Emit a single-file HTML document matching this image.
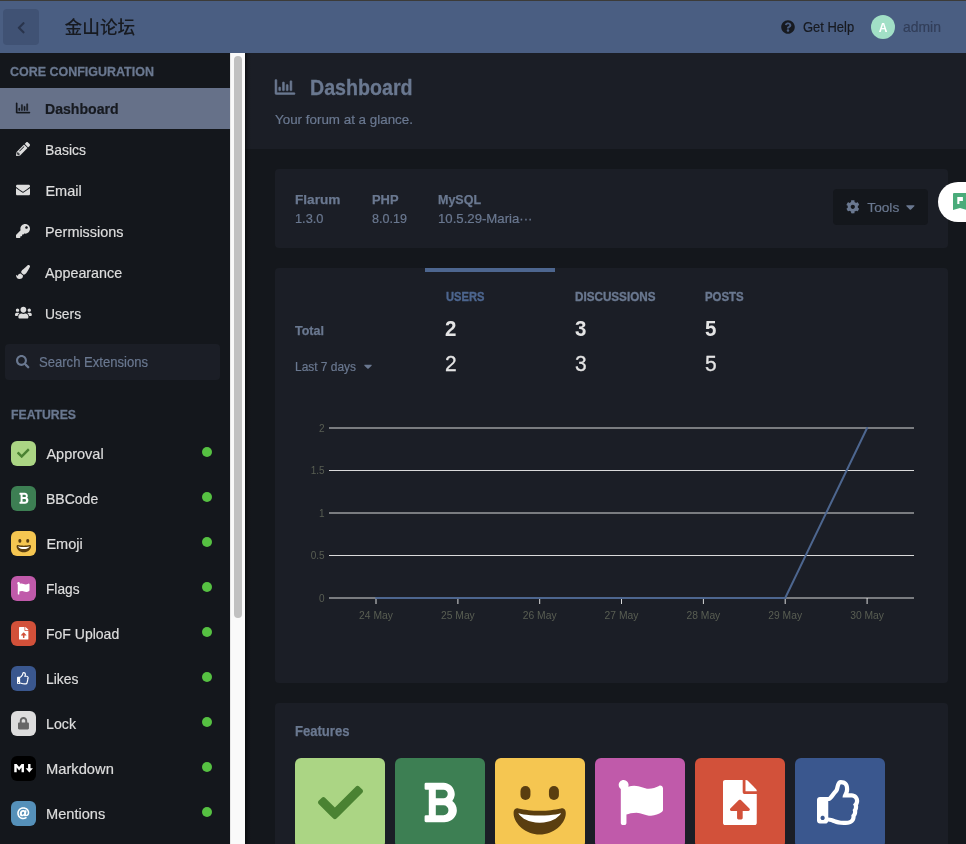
<!DOCTYPE html>
<html lang="zh"><head><meta charset="utf-8"><title>金山论坛 - Dashboard</title>
<style>
html,body{margin:0;padding:0}
body{width:966px;height:844px;overflow:hidden;position:relative;background:#14171c;font-family:"Liberation Sans", "Noto Sans CJK SC", sans-serif;color:#dddddd}
.t{position:absolute;white-space:nowrap;transform-origin:0 50%}
header,aside,main{will-change:transform}
.abs{position:absolute}
header{position:absolute;left:0;top:0;width:966px;height:53px;background:#4a5e82;box-sizing:border-box;border-top:1px solid #3c3b38}
aside{position:absolute;left:0;top:53px;width:230px;height:791px;background:#14171c}
.track{position:absolute;left:230px;top:53px;width:15px;height:791px;background:#fafafa;box-shadow:inset 1px 0 0 #e8e8e8}
.thumb{position:absolute;left:4px;top:3px;width:8px;height:562px;border-radius:4px;background:#c1c1c1}
main{position:absolute;left:245px;top:53px;width:721px;height:791px;background:#14171c;overflow:hidden}
.widget{position:absolute;background:#1b1e26;border-radius:4px}
.tile{position:absolute;width:90px;height:90px;border-radius:6px;top:758px}
.ico{position:absolute;left:11px;width:25px;height:25px;border-radius:6px}
.dot{position:absolute;left:202px;width:10px;height:10px;border-radius:5px;background:#56c142}
</style></head><body>

<header>
<div class="abs" style="left:3px;top:8px;width:36px;height:36px;border-radius:4px;background:#405274"></div>
<svg width="8.4" height="13.4" viewBox="0 0 320 512" style="position:absolute;left:16.9px;top:20.0px;overflow:visible"><path fill="#29344c" d="M34.520 239.030L228.870 44.690c9.370-9.370 24.570-9.370 33.940 0l22.670 22.670c9.360 9.360 9.370 24.520.04 33.900L131.490 256l154.020 154.750c9.340 9.380 9.320 24.540-.04 33.900l-22.670 22.670c-9.370 9.370-24.570 9.370-33.940 0L34.520 272.970c-9.370-9.370-9.370-24.570 0-33.940z"/></svg>
<div class="t" style="left:64.5px;top:17px;font-size:17.7px;line-height:20px;color:#171a20;font-weight:500;">金山论坛</div>
<svg width="14" height="14" viewBox="0 0 512 512" style="position:absolute;left:781px;top:19px;overflow:visible"><path fill="#171a20" d="M504 256c0 136.997-111.043 248-248 248S8 392.997 8 256C8 119.083 119.043 8 256 8s248 111.083 248 248zM262.655 90c-54.497 0-89.255 22.957-116.549 63.758-3.536 5.286-2.353 12.415 2.715 16.258l34.699 26.310c5.205 3.947 12.621 3.008 16.665-2.122 17.864-22.658 30.113-35.797 57.303-35.797 20.429 0 45.698 13.148 45.698 32.958 0 14.976-12.363 22.667-32.534 33.976C247.128 238.528 216 254.941 216 296v4c0 6.627 5.373 12 12 12h56c6.627 0 12-5.373 12-12v-1.333c0-28.462 83.186-29.647 83.186-106.667 0-58.002-60.165-102-116.531-102zM256 338c-25.365 0-46 20.635-46 46 0 25.364 20.635 46 46 46s46-20.636 46-46c0-25.365-20.635-46-46-46z"/></svg>
<div class="t" style="left:802.5px;top:18px;font-size:14.0px;line-height:16px;color:#171a20;font-weight:normal;transform:scaleX(0.925);-webkit-text-stroke:0.2px #171a20;">Get Help</div>
<div class="abs" style="left:871px;top:14px;width:24px;height:24px;border-radius:12px;background:#a1dfc6"></div>
<div class="t" style="left:878.8px;top:20px;font-size:12px;line-height:14px;color:#ffffff;font-weight:bold;">A</div>
<div class="t" style="left:903.3px;top:18px;font-size:14.6px;line-height:16px;color:#323e59;font-weight:normal;transform:scaleX(0.955);-webkit-text-stroke:0.2px #323e59;">admin</div>
</header>
<aside>
<div class="t" style="left:10.3px;top:11px;font-size:13.5px;line-height:15px;color:#6a7890;font-weight:bold;transform:scaleX(0.924);-webkit-text-stroke:0.3px #6a7890;">CORE CONFIGURATION</div>
<div class="abs" style="left:0;top:35px;width:230px;height:41px;background:#667189"></div>
<div class="t" style="left:45.4px;top:48px;font-size:14.5px;line-height:16px;color:#171a20;font-weight:bold;transform:scaleX(0.972);-webkit-text-stroke:0.2px #171a20;">Dashboard</div>
<svg width="14" height="14" viewBox="0 0 512 512" style="position:absolute;left:16px;top:47.900000000000006px;overflow:visible"><path fill="#171a20" stroke="#171a20" stroke-width="12" stroke-linejoin="round" d="M396.8 352h22.400c6.400 0 12.800-6.400 12.800-12.800V108.800c0-6.400-6.400-12.800-12.800-12.800h-22.400c-6.400 0-12.800 6.400-12.800 12.800v230.400c0 6.400 6.400 12.800 12.800 12.800zm-192 0h22.400c6.400 0 12.800-6.400 12.800-12.800V140.800c0-6.400-6.400-12.800-12.800-12.800h-22.400c-6.400 0-12.800 6.400-12.800 12.800v198.400c0 6.400 6.400 12.800 12.800 12.800zm96 0h22.400c6.400 0 12.800-6.400 12.800-12.800V204.800c0-6.400-6.400-12.800-12.800-12.800h-22.400c-6.400 0-12.800 6.400-12.800 12.800v134.400c0 6.400 6.400 12.800 12.800 12.800zM496 400H48V80c0-8.840-7.160-16-16-16H16C7.160 64 0 71.160 0 80v336c0 17.670 14.330 32 32 32h464c8.840 0 16-7.160 16-16v-16c0-8.840-7.160-16-16-16zm-387.200-48h22.400c6.400 0 12.800-6.400 12.800-12.800v-70.400c0-6.400-6.400-12.800-12.800-12.800h-22.400c-6.400 0-12.800 6.400-12.800 12.800v70.400c0 6.400 6.400 12.800 12.800 12.800z"/></svg>
<div class="t" style="left:45.4px;top:89px;font-size:14.5px;line-height:16px;color:#dddddd;font-weight:normal;transform:scaleX(0.959);-webkit-text-stroke:0.2px #dddddd;">Basics</div>
<svg width="14" height="14" viewBox="0 0 512 512" style="position:absolute;left:16px;top:88.9px;overflow:visible"><path fill="#dddddd" d="M497.900 142.100l-46.100 46.100c-4.700 4.700-12.300 4.700-17 0l-111-111c-4.700-4.700-4.700-12.300 0-17l46.100-46.100c18.700-18.700 49.100-18.700 67.900 0l60.100 60.100c18.800 18.700 18.800 49.100 0 67.900zM284.200 99.800L21.600 362.400.4 483.900c-2.900 16.400 11.400 30.600 27.800 27.800l121.500-21.300 262.600-262.600c4.700-4.700 4.700-12.300 0-17l-111-111c-4.800-4.700-12.400-4.700-17.100 0zM124.100 339.900c-5.500-5.500-5.500-14.300 0-19.800l154-154c5.500-5.500 14.300-5.500 19.800 0s5.500 14.300 0 19.800l-154 154c-5.500 5.500-14.300 5.500-19.800 0zM88 424h48v36.300l-64.500 11.300-31.100-31.100L51.700 376H88v48z"/></svg>
<div class="t" style="left:45.4px;top:130px;font-size:14.5px;line-height:16px;color:#dddddd;font-weight:normal;transform:scaleX(1.0);-webkit-text-stroke:0.2px #dddddd;">Email</div>
<svg width="14" height="14" viewBox="0 0 512 512" style="position:absolute;left:16px;top:129.9px;overflow:visible"><path fill="#dddddd" d="M502.300 190.800c3.900-3.100 9.700-.2 9.700 4.700V400c0 26.500-21.500 48-48 48H48c-26.500 0-48-21.500-48-48V195.600c0-5 5.700-7.800 9.700-4.700 22.400 17.400 52.100 39.500 154.100 113.600 21.100 15.400 56.700 47.800 92.200 47.600 35.700.3 72-32.800 92.300-47.600 102-74.100 131.600-96.300 154-113.700zM256 320c23.200.4 56.600-29.200 73.400-41.400 132.700-96.300 142.800-104.700 173.400-128.700 5.800-4.500 9.200-11.500 9.200-18.900v-19c0-26.500-21.500-48-48-48H48C21.500 64 0 85.500 0 112v19c0 7.400 3.400 14.300 9.200 18.900 30.600 23.900 40.700 32.400 173.400 128.700 16.800 12.200 50.200 41.800 73.400 41.400z"/></svg>
<div class="t" style="left:45.4px;top:171px;font-size:14.5px;line-height:16px;color:#dddddd;font-weight:normal;transform:scaleX(0.993);-webkit-text-stroke:0.2px #dddddd;">Permissions</div>
<svg width="14" height="14" viewBox="0 0 512 512" style="position:absolute;left:16px;top:170.9px;overflow:visible"><path fill="#dddddd" d="M512 176.001C512 273.203 433.202 352 336 352c-11.220 0-22.190-1.062-32.827-3.069l-24.012 27.014A23.999 23.999 0 0 1 261.223 384H224v40c0 13.255-10.745 24-24 24h-40v40c0 13.255-10.745 24-24 24H24c-13.255 0-24-10.745-24-24v-78.059c0-6.365 2.529-12.470 7.029-16.971l161.802-161.802C163.108 213.814 160 195.271 160 176 160 78.798 238.797.001 335.999 0 433.488-.001 512 78.511 512 176.001zM336 128c0 26.510 21.490 48 48 48s48-21.490 48-48-21.490-48-48-48-48 21.490-48 48z"/></svg>
<div class="t" style="left:45.4px;top:212px;font-size:14.5px;line-height:16px;color:#dddddd;font-weight:normal;transform:scaleX(0.986);-webkit-text-stroke:0.2px #dddddd;">Appearance</div>
<svg width="14" height="14" viewBox="0 0 512 512" style="position:absolute;left:16px;top:211.89999999999998px;overflow:visible"><path fill="#dddddd" d="M167.020 309.340c-40.120 2.580-76.530 17.860-97.190 72.300-2.350 6.210-8 9.980-14.590 9.980-11.110 0-45.460-27.670-55.250-34.350C0 439.620 37.930 512 128 512c75.860 0 128-43.770 128-120.190 0-3.110-.65-6.080-.97-9.130l-88.010-73.340zM457.890 0c-15.160 0-29.370 6.710-40.210 16.450C213.270 199.050 192 203.340 192 257.090c0 13.700 3.250 26.760 8.730 38.700l63.820 53.180c7.210 1.800 14.640 3.030 22.390 3.030 62.110 0 98.110-45.470 211.160-256.460 7.380-14.350 13.900-29.850 13.900-45.990C512 20.640 486 0 457.890 0z"/></svg>
<div class="t" style="left:45.4px;top:253px;font-size:14.5px;line-height:16px;color:#dddddd;font-weight:normal;transform:scaleX(0.952);-webkit-text-stroke:0.2px #dddddd;">Users</div>
<svg width="16.8" height="13.4" viewBox="0 0 640 512" style="position:absolute;left:14.6px;top:253.2px;overflow:visible"><path fill="#dddddd" d="M96 224c35.300 0 64-28.700 64-64s-28.700-64-64-64-64 28.700-64 64 28.700 64 64 64zm448 0c35.300 0 64-28.700 64-64s-28.700-64-64-64-64 28.700-64 64 28.700 64 64 64zm32 32h-64c-17.600 0-33.500 7.100-45.100 18.600 40.300 22.100 68.900 62 75.100 109.400h66c17.700 0 32-14.300 32-32v-32c0-35.300-28.700-64-64-64zm-256 0c61.900 0 112-50.100 112-112S381.900 32 320 32 208 82.100 208 144s50.100 112 112 112zm76.800 32h-8.300c-20.800 10-43.900 16-68.500 16s-47.600-6-68.500-16h-8.300C179.600 288 128 339.600 128 403.200V432c0 26.500 21.500 48 48 48h288c26.500 0 48-21.500 48-48v-28.800c0-63.600-51.600-115.200-115.200-115.200zm-223.700-13.400C161.500 263.100 145.600 256 128 256H64c-35.300 0-64 28.700-64 64v32c0 17.700 14.300 32 32 32h65.900c6.300-47.400 34.900-87.300 75.200-109.400z"/></svg>
<div class="abs" style="left:5px;top:291px;width:215px;height:36px;border-radius:4px;background:#1b1e26"></div>
<svg width="13.5" height="13.5" viewBox="0 0 512 512" style="position:absolute;left:16px;top:302.3px;overflow:visible"><path fill="#6a7890" d="M505 442.700L405.300 343c-4.500-4.500-10.600-7-17-7H372c27.600-35.300 44-79.700 44-128C416 93.100 322.900 0 208 0S0 93.100 0 208s93.100 208 208 208c48.300 0 92.700-16.400 128-44v16.300c0 6.400 2.500 12.500 7 17l99.700 99.700c9.400 9.400 24.600 9.400 33.900 0l28.300-28.300c9.400-9.400 9.400-24.600.1-34zM208 336c-70.700 0-128-57.200-128-128 0-70.700 57.200-128 128-128 70.700 0 128 57.200 128 128 0 70.700-57.200 128-128 128z"/></svg>
<div class="t" style="left:39.3px;top:301px;font-size:14.0px;line-height:16px;color:#6a7890;font-weight:normal;transform:scaleX(0.934);-webkit-text-stroke:0.2px #6a7890;">Search Extensions</div>
<div class="t" style="left:10.5px;top:354px;font-size:13.6px;line-height:15px;color:#6a7890;font-weight:bold;transform:scaleX(0.9);-webkit-text-stroke:0.3px #6a7890;">FEATURES</div>
<div class="ico" style="top:388px;background:#abd584">
<svg width="12.5" height="12.5" viewBox="0 0 512 512" style="position:absolute;left:6.25px;top:6.25px;overflow:visible"><path fill="#4a8232" d="M173.898 439.404l-166.400-166.400c-9.997-9.997-9.997-26.206 0-36.204l36.203-36.204c9.997-9.998 26.207-9.998 36.204 0L192 312.690 432.095 72.596c9.997-9.997 26.207-9.997 36.204 0l36.203 36.204c9.997 9.997 9.997 26.206 0 36.204l-294.400 294.401c-9.998 9.997-26.207 9.997-36.204-.001z"/></svg>
</div>
<div class="t" style="left:46.4px;top:393px;font-size:14.5px;line-height:16px;color:#dddddd;font-weight:normal;transform:scaleX(1.0);-webkit-text-stroke:0.2px #dddddd;">Approval</div>
<div class="dot" style="top:394px"></div>
<div class="ico" style="top:433px;background:#3d7f53">
<svg width="9.375" height="12.5" viewBox="0 0 384 512" style="position:absolute;left:7.8125px;top:6.25px;overflow:visible"><path fill="#ffffff" d="M333.490 238a122 122 0 0 0 27-65.210C367.870 96.490 308 32 233.420 32H34a16 16 0 0 0-16 16v48a16 16 0 0 0 16 16h31.870v288H34a16 16 0 0 0-16 16v48a16 16 0 0 0 16 16h209.320c70.800 0 134.140-51.750 141-122.400 4.740-48.450-16.390-92.060-50.830-119.600zM145.660 112h87.760a48 48 0 0 1 0 96h-87.760zm87.760 288h-87.760V288h87.760a56 56 0 0 1 0 112z"/></svg>
</div>
<div class="t" style="left:46.4px;top:438px;font-size:14.5px;line-height:16px;color:#dddddd;font-weight:normal;transform:scaleX(0.966);-webkit-text-stroke:0.2px #dddddd;">BBCode</div>
<div class="dot" style="top:439px"></div>
<div class="ico" style="top:478px;background:#f5c651">
<svg viewBox="0 0 36 36" width="23.6" height="23.6" style="position:absolute;left:0.7px;top:0.9px"><path fill="#5a3e10" d="M18 21c-3.623 0-6.027-.422-9-1-.679-.131-2 0-2 2 0 4 4.595 9 11 9 6.404 0 11-5 11-9 0-2-1.321-2.132-2-2-2.973.578-5.377 1-9 1z"/><path fill="#FFF" d="M9 22s3 1 9 1 9-1 9-1-2 4-9 4-9-4-9-4z"/><rect fill="#5a3e10" x="9.9" y="10.55" width="4.2" height="5.9" rx="2.1"/><rect fill="#5a3e10" x="21.9" y="10.55" width="4.2" height="5.9" rx="2.1"/></svg>
</div>
<div class="t" style="left:46.4px;top:483px;font-size:14.5px;line-height:16px;color:#dddddd;font-weight:normal;transform:scaleX(1.0);-webkit-text-stroke:0.2px #dddddd;">Emoji</div>
<div class="dot" style="top:484px"></div>
<div class="ico" style="top:523px;background:#c05aaa">
<svg width="12.5" height="12.5" viewBox="0 0 512 512" style="position:absolute;left:6.25px;top:6.25px;overflow:visible"><path fill="#ffffff" d="M349.565 98.783C295.978 98.783 251.721 64 184.348 64c-24.955 0-47.309 4.384-68.045 12.013a55.947 55.947 0 0 0 3.586-23.562C118.117 24.015 94.806 1.206 66.338.048 34.345-1.254 8 24.296 8 56c0 19.026 9.497 35.825 24 45.945V488c0 13.255 10.745 24 24 24h16c13.255 0 24-10.745 24-24v-94.4c28.311-12.064 63.582-22.122 114.435-22.122 53.588 0 97.844 34.783 165.217 34.783 48.169 0 86.667-16.294 122.505-40.858C506.84 359.452 512 349.571 512 339.045v-243.1c0-23.393-24.269-38.87-45.485-29.016-34.338 15.948-76.454 31.854-116.95 31.854z"/></svg>
</div>
<div class="t" style="left:46.4px;top:528px;font-size:14.5px;line-height:16px;color:#dddddd;font-weight:normal;transform:scaleX(0.945);-webkit-text-stroke:0.2px #dddddd;">Flags</div>
<div class="dot" style="top:529px"></div>
<div class="ico" style="top:568px;background:#d2513a">
<svg width="9.375" height="12.5" viewBox="0 0 384 512" style="position:absolute;left:7.8125px;top:6.25px;overflow:visible"><path fill="#ffffff" d="M224 136V0H24C10.7 0 0 10.7 0 24v464c0 13.3 10.7 24 24 24h336c13.3 0 24-10.700 24-24V160H248c-13.200 0-24-10.800-24-24zm65.180 216.010H224v80c0 8.840-7.160 16-16 16h-32c-8.840 0-16-7.160-16-16v-80H94.820c-14.280 0-21.410-17.290-11.270-27.360l96.420-95.700c6.650-6.610 17.390-6.610 24.040 0l96.420 95.700c10.150 10.070 3.030 27.360-11.250 27.360zM377 105L279.100 7c-4.500-4.500-10.600-7-17-7H256v128h128v-6.100c0-6.300-2.500-12.400-7-16.900z"/></svg>
</div>
<div class="t" style="left:46.4px;top:573px;font-size:14.5px;line-height:16px;color:#dddddd;font-weight:normal;transform:scaleX(0.966);-webkit-text-stroke:0.2px #dddddd;">FoF Upload</div>
<div class="dot" style="top:574px"></div>
<div class="ico" style="top:613px;background:#3a578e">
<svg width="12.5" height="12.5" viewBox="0 0 512 512" style="position:absolute;left:6.25px;top:6.25px;overflow:visible"><path fill="#ffffff" d="M466.27 286.69C475.04 271.84 480 256 480 236.85c0-44.015-37.218-85.580-85.820-85.580H357.700c4.920-12.810 8.850-28.130 8.850-46.540C366.550 31.936 328.860 0 271.280 0c-61.607 0-58.093 94.933-71.760 108.600-22.747 22.747-49.615 66.447-68.760 83.400H32c-17.673 0-32 14.327-32 32v240c0 17.673 14.327 32 32 32h64c14.893 0 27.408-10.174 30.978-23.950 44.509 1.001 75.060 39.940 177.802 39.940 7.220 0 15.220.010 22.220.010 77.117 0 111.986-39.423 112.940-95.330 13.319-18.425 20.299-43.122 17.340-66.990 9.854-18.452 13.664-40.343 8.990-62.990zm-61.750 53.830c12.560 21.130 1.260 49.410-13.940 57.570 7.700 48.780-17.608 65.900-53.120 65.900h-37.820c-71.639 0-118.029-37.820-171.640-37.820V240h10.920c28.360 0 67.980-70.890 94.540-97.460 28.360-28.360 18.910-75.630 37.820-94.540 47.270 0 47.270 32.980 47.270 56.730 0 39.170-28.360 56.720-28.360 94.540h103.990c21.110 0 37.730 18.910 37.820 37.820.09 18.900-12.820 37.810-22.270 37.810 13.489 14.555 16.371 45.236-5.210 65.620zM88 432c0 13.255-10.745 24-24 24s-24-10.745-24-24 10.745-24 24-24 24 10.745 24 24z"/></svg>
</div>
<div class="t" style="left:46.4px;top:618px;font-size:14.5px;line-height:16px;color:#dddddd;font-weight:normal;transform:scaleX(0.959);-webkit-text-stroke:0.2px #dddddd;">Likes</div>
<div class="dot" style="top:619px"></div>
<div class="ico" style="top:658px;background:#dddddd">
<svg width="10.9375" height="12.5" viewBox="0 0 448 512" style="position:absolute;left:7.03125px;top:6.25px;overflow:visible"><path fill="#666666" d="M400 224h-24v-72C376 68.200 307.800 0 224 0S72 68.200 72 152v72H48c-26.500 0-48 21.500-48 48v192c0 26.500 21.500 48 48 48h352c26.500 0 48-21.500 48-48V272c0-26.500-21.500-48-48-48zm-104 0H152v-72c0-39.700 32.300-72 72-72s72 32.300 72 72v72z"/></svg>
</div>
<div class="t" style="left:46.4px;top:663px;font-size:14.5px;line-height:16px;color:#dddddd;font-weight:normal;transform:scaleX(0.979);-webkit-text-stroke:0.2px #dddddd;">Lock</div>
<div class="dot" style="top:664px"></div>
<div class="ico" style="top:703px;background:#000000">
<svg viewBox="92 151 474 213" width="19.2" height="8.4" style="position:absolute;left:2.9px;top:8.2px"><path fill="#fff" d="M338.5 360.600H277v-120l-61.500 76.900-61.500-76.900v120H92.300V151.400h61.500l61.500 76.900 61.500-76.900h61.500v209.200zM473.800 363.700L381.500 256H443V151.400h61.500V256H566z"/></svg>
</div>
<div class="t" style="left:46.4px;top:708px;font-size:14.5px;line-height:16px;color:#dddddd;font-weight:normal;transform:scaleX(1.014);-webkit-text-stroke:0.2px #dddddd;">Markdown</div>
<div class="dot" style="top:709px"></div>
<div class="ico" style="top:748px;background:#5590b9">
<svg width="12.5" height="12.5" viewBox="0 0 512 512" style="position:absolute;left:6.25px;top:6.25px;overflow:visible"><path fill="#ffffff" d="M256 8C118.941 8 8 118.919 8 256c0 137.059 110.919 248 248 248 48.154 0 95.342-14.140 135.408-40.223 12.005-7.815 14.625-24.288 5.552-35.372l-10.177-12.433c-7.671-9.371-21.179-11.667-31.373-5.129C325.920 429.757 291.314 440 256 440c-101.458 0-184-82.542-184-184S154.542 72 256 72c100.139 0 184 57.619 184 160 0 38.786-21.093 79.742-58.170 83.693-17.349-.454-16.910-12.857-13.476-30.024l23.433-121.110C394.653 149.750 383.308 136 368.225 136h-44.981a13.518 13.518 0 0 0-13.432 11.993l-.010.092c-14.697-17.901-40.448-21.775-59.971-21.775-74.580 0-137.831 62.234-137.831 151.460 0 65.303 36.785 105.870 96 105.870 26.984 0 57.369-15.637 74.991-38.333 9.522 34.104 40.613 34.103 70.710 34.103C462.609 379.410 504 307.798 504 232 504 95.653 394.023 8 256 8zm-21.680 304.430c-22.249 0-36.070-15.623-36.070-40.771 0-44.993 30.779-72.729 58.630-72.729 22.292 0 35.601 15.241 35.601 40.770 0 45.061-33.875 72.730-58.161 72.730z"/></svg>
</div>
<div class="t" style="left:46.4px;top:753px;font-size:14.5px;line-height:16px;color:#dddddd;font-weight:normal;transform:scaleX(1.007);-webkit-text-stroke:0.2px #dddddd;">Mentions</div>
<div class="dot" style="top:754px"></div>
</aside>
<div class="track"><div class="thumb"></div></div>
<main>
<div class="abs" style="left:0;top:0;width:721px;height:96px;background:#1b1e26"></div>
<svg width="20" height="20" viewBox="0 0 512 512" style="position:absolute;left:30px;top:24.0px;overflow:visible"><path fill="#6a7890" stroke="#6a7890" stroke-width="14" stroke-linejoin="round" d="M396.8 352h22.400c6.400 0 12.800-6.400 12.800-12.800V108.800c0-6.400-6.400-12.800-12.800-12.800h-22.400c-6.400 0-12.800 6.400-12.800 12.800v230.400c0 6.400 6.400 12.800 12.800 12.800zm-192 0h22.400c6.400 0 12.800-6.400 12.800-12.800V140.800c0-6.400-6.400-12.800-12.800-12.800h-22.400c-6.400 0-12.800 6.400-12.800 12.800v198.400c0 6.400 6.400 12.800 12.800 12.800zm96 0h22.400c6.400 0 12.800-6.400 12.800-12.800V204.800c0-6.400-6.400-12.800-12.800-12.800h-22.400c-6.400 0-12.800 6.400-12.800 12.800v134.400c0 6.400 6.400 12.800 12.800 12.800zM496 400H48V80c0-8.840-7.160-16-16-16H16C7.160 64 0 71.160 0 80v336c0 17.670 14.330 32 32 32h464c8.840 0 16-7.160 16-16v-16c0-8.840-7.160-16-16-16zm-387.200-48h22.400c6.400 0 12.800-6.400 12.800-12.800v-70.400c0-6.400-6.400-12.800-12.800-12.800h-22.400c-6.400 0-12.800 6.400-12.800 12.800v70.400c0 6.400 6.400 12.800 12.800 12.800z"/></svg>
<div class="t" style="left:65.30000000000001px;top:23px;font-size:21.2px;line-height:23px;color:#6a7890;font-weight:bold;transform:scaleX(0.927);-webkit-text-stroke:0.3px #6a7890;">Dashboard</div>
<div class="t" style="left:30px;top:59px;font-size:13.4px;line-height:15px;color:#6a7890;font-weight:normal;-webkit-text-stroke:0.2px #6a7890;">Your forum at a glance.</div>
<div class="widget" style="left:30px;top:116px;width:673px;height:79px"></div>
<div class="t" style="left:50px;top:139px;font-size:13.1px;line-height:15px;color:#6a7890;font-weight:bold;transform:scaleX(1.04);-webkit-text-stroke:0.25px #6a7890;">Flarum</div>
<div class="t" style="left:50px;top:158px;font-size:12.8px;line-height:15px;color:#6a7890;font-weight:normal;transform:scaleX(1.0);-webkit-text-stroke:0.2px #6a7890;">1.3.0</div>
<div class="t" style="left:126.5px;top:139px;font-size:13.1px;line-height:15px;color:#6a7890;font-weight:bold;transform:scaleX(0.985);-webkit-text-stroke:0.25px #6a7890;">PHP</div>
<div class="t" style="left:126.5px;top:158px;font-size:12.8px;line-height:15px;color:#6a7890;font-weight:normal;transform:scaleX(0.98);-webkit-text-stroke:0.2px #6a7890;">8.0.19</div>
<div class="t" style="left:192.7px;top:139px;font-size:13.1px;line-height:15px;color:#6a7890;font-weight:bold;transform:scaleX(0.955);-webkit-text-stroke:0.25px #6a7890;">MySQL</div>
<div class="t" style="left:192.7px;top:158px;font-size:12.8px;line-height:15px;color:#6a7890;font-weight:normal;transform:scaleX(1.03);-webkit-text-stroke:0.2px #6a7890;">10.5.29-Maria···</div>
<div class="abs" style="left:588px;top:136px;width:95px;height:36px;border-radius:4px;background:#14171c"></div>
<svg width="13.6" height="13.6" viewBox="0 0 512 512" style="position:absolute;left:601.2px;top:146.8px;overflow:visible"><path fill="#6a7890" d="M487.4 315.7l-42.600-24.600c4.300-23.200 4.300-47 0-70.200l42.600-24.600c4.900-2.800 7.100-8.600 5.500-14-11.100-35.600-30-67.800-54.700-94.600-3.800-4.100-10-5.100-14.800-2.300L380.800 110c-17.900-15.400-38.500-27.300-60.800-35.100V25.800c0-5.600-3.900-10.500-9.400-11.700-36.700-8.200-74.300-7.800-109.200 0-5.500 1.200-9.400 6.100-9.400 11.700V75c-22.200 7.900-42.800 19.800-60.800 35.100L88.700 85.500c-4.900-2.800-11-1.900-14.800 2.300-24.700 26.700-43.600 58.900-54.700 94.600-1.700 5.400.6 11.200 5.500 14L67.300 221c-4.300 23.200-4.300 47 0 70.200l-42.600 24.600c-4.900 2.800-7.100 8.600-5.500 14 11.100 35.600 30 67.800 54.700 94.600 3.800 4.100 10 5.100 14.800 2.300l42.600-24.600c17.900 15.400 38.500 27.300 60.800 35.100v49.200c0 5.600 3.900 10.500 9.400 11.700 36.700 8.200 74.300 7.800 109.200 0 5.500-1.200 9.400-6.100 9.400-11.700v-49.200c22.200-7.900 42.800-19.800 60.800-35.100l42.600 24.600c4.900 2.800 11 1.900 14.800-2.300 24.700-26.700 43.600-58.900 54.700-94.600 1.500-5.500-.7-11.300-5.600-14.100zM256 336c-44.100 0-80-35.900-80-80s35.900-80 80-80 80 35.900 80 80-35.900 80-80 80z"/></svg>
<div class="t" style="left:622.3px;top:147px;font-size:13.7px;line-height:15px;color:#6a7890;font-weight:normal;-webkit-text-stroke:0.2px #6a7890;">Tools</div>
<svg width="8.75" height="14" viewBox="0 0 320 512" style="position:absolute;left:661.2px;top:147px;overflow:visible"><path fill="#6a7890" d="M31.300 192h257.300c17.800 0 26.700 21.500 14.100 34.100L174.100 354.800c-7.800 7.800-20.500 7.800-28.300 0L17.200 226.100C4.600 213.500 13.500 192 31.300 192z"/></svg>
<div class="abs" style="left:693px;top:129px;width:60px;height:40px;border-radius:20px;background:#fff"></div>
<svg class="abs" style="left:708px;top:140px" width="14" height="17" viewBox="0 0 14 17"><path fill="#4aab7a" d="M1 0h13v17l-7-2-7 2V1a1 1 0 0 1 1-1z"/><path fill="#fff" d="M4.300 3.900h2.100v7.200H4.300zM6.400 3.900h3.500v4.200H6.400z"/></svg>
<div class="widget" style="left:30px;top:215px;width:673px;height:415px"></div>
<div class="abs" style="left:180px;top:215px;width:130px;height:4px;background:#4d668f"></div>
<div class="t" style="left:200.5px;top:236px;font-size:13.3px;line-height:15px;color:#4d668f;font-weight:bold;transform:scaleX(0.838);-webkit-text-stroke:0.4px #4d668f;">USERS</div>
<div class="t" style="left:200.0px;top:263px;font-size:21.8px;line-height:25px;color:#e4e4e4;font-weight:bold;transform:scaleX(0.94);">2</div>
<div class="t" style="left:199.7px;top:298px;font-size:22.3px;line-height:25px;color:#e4e4e4;font-weight:normal;transform:scaleX(0.94);-webkit-text-stroke:0.3px #e4e4e4;">2</div>
<div class="t" style="left:330.29999999999995px;top:236px;font-size:13.3px;line-height:15px;color:#6a7890;font-weight:bold;transform:scaleX(0.878);-webkit-text-stroke:0.4px #6a7890;">DISCUSSIONS</div>
<div class="t" style="left:329.79999999999995px;top:263px;font-size:21.8px;line-height:25px;color:#e4e4e4;font-weight:bold;transform:scaleX(0.94);">3</div>
<div class="t" style="left:329.49999999999994px;top:298px;font-size:22.3px;line-height:25px;color:#e4e4e4;font-weight:normal;transform:scaleX(0.94);-webkit-text-stroke:0.3px #e4e4e4;">3</div>
<div class="t" style="left:460.29999999999995px;top:236px;font-size:13.3px;line-height:15px;color:#6a7890;font-weight:bold;transform:scaleX(0.859);-webkit-text-stroke:0.4px #6a7890;">POSTS</div>
<div class="t" style="left:459.79999999999995px;top:263px;font-size:21.8px;line-height:25px;color:#e4e4e4;font-weight:bold;transform:scaleX(0.94);">5</div>
<div class="t" style="left:459.49999999999994px;top:298px;font-size:22.3px;line-height:25px;color:#e4e4e4;font-weight:normal;transform:scaleX(0.94);-webkit-text-stroke:0.3px #e4e4e4;">5</div>
<div class="t" style="left:50px;top:270px;font-size:12.9px;line-height:15px;color:#6a7890;font-weight:bold;transform:scaleX(0.97);-webkit-text-stroke:0.25px #6a7890;">Total</div>
<div class="t" style="left:50px;top:306px;font-size:13px;line-height:15px;color:#6a7890;font-weight:normal;transform:scaleX(0.918);-webkit-text-stroke:0.2px #6a7890;">Last 7 days</div>
<svg width="8" height="12.8" viewBox="0 0 320 512" style="position:absolute;left:118.5px;top:306.8px;overflow:visible"><path fill="#6a7890" d="M31.300 192h257.300c17.800 0 26.700 21.500 14.100 34.100L174.100 354.800c-7.800 7.800-20.500 7.800-28.300 0L17.200 226.100C4.600 213.500 13.500 192 31.300 192z"/></svg>
<svg class="abs" style="left:30px;top:347px" width="673" height="240" viewBox="275 400 673 240" font-family='Liberation Sans, Noto Sans CJK SC, sans-serif' font-size="10" fill="#595e53"><line x1="329" x2="914" y1="428" y2="428" stroke="#dadada" stroke-width="1"/><text x="324.6" y="431.6" text-anchor="end">2</text><line x1="329" x2="914" y1="470.5" y2="470.5" stroke="#dadada" stroke-width="1"/><text x="324.6" y="474.1" text-anchor="end">1.5</text><line x1="329" x2="914" y1="513" y2="513" stroke="#dadada" stroke-width="1"/><text x="324.6" y="516.6" text-anchor="end">1</text><line x1="329" x2="914" y1="555.5" y2="555.5" stroke="#dadada" stroke-width="1"/><text x="324.6" y="559.1" text-anchor="end">0.5</text><line x1="329" x2="914" y1="598" y2="598" stroke="#dadada" stroke-width="1"/><text x="324.6" y="601.6" text-anchor="end">0</text><line x1="376.0" x2="376.0" y1="598" y2="604" stroke="#dadada" stroke-width="1"/><text x="376.0" y="618.8" text-anchor="middle" font-size="10.3">24 May</text><line x1="457.9" x2="457.9" y1="598" y2="604" stroke="#dadada" stroke-width="1"/><text x="457.9" y="618.8" text-anchor="middle" font-size="10.3">25 May</text><line x1="539.7" x2="539.7" y1="598" y2="604" stroke="#dadada" stroke-width="1"/><text x="539.7" y="618.8" text-anchor="middle" font-size="10.3">26 May</text><line x1="621.5" x2="621.5" y1="598" y2="604" stroke="#dadada" stroke-width="1"/><text x="621.5" y="618.8" text-anchor="middle" font-size="10.3">27 May</text><line x1="703.4" x2="703.4" y1="598" y2="604" stroke="#dadada" stroke-width="1"/><text x="703.4" y="618.8" text-anchor="middle" font-size="10.3">28 May</text><line x1="785.2" x2="785.2" y1="598" y2="604" stroke="#dadada" stroke-width="1"/><text x="785.2" y="618.8" text-anchor="middle" font-size="10.3">29 May</text><line x1="867.1" x2="867.1" y1="598" y2="604" stroke="#dadada" stroke-width="1"/><text x="867.1" y="618.8" text-anchor="middle" font-size="10.3">30 May</text><polyline points="376.0,598 457.9,598 539.7,598 621.5,598 703.4,598 785.2,598 867.1,428" fill="none" stroke="#4d668f" stroke-width="2" stroke-linejoin="round" stroke-linecap="round"/></svg>
<div class="widget" style="left:30px;top:650px;width:673px;height:200px"></div>
<div class="t" style="left:50.30000000000001px;top:671px;font-size:13.8px;line-height:15px;color:#6a7890;font-weight:bold;transform:scaleX(0.947);-webkit-text-stroke:0.25px #6a7890;">Features</div>
<div class="tile" style="left:50px;top:705px;background:#abd584">
<svg width="45.0" height="45" viewBox="0 0 512 512" style="position:absolute;left:22.5px;top:21.6px;overflow:visible"><path fill="#4a8232" d="M173.898 439.404l-166.400-166.400c-9.997-9.997-9.997-26.206 0-36.204l36.203-36.204c9.997-9.998 26.207-9.998 36.204 0L192 312.690 432.095 72.596c9.997-9.997 26.207-9.997 36.204 0l36.203 36.204c9.997 9.997 9.997 26.206 0 36.204l-294.400 294.401c-9.998 9.997-26.207 9.997-36.204-.001z"/></svg>
</div>
<div class="tile" style="left:150px;top:705px;background:#3d7f53">
<svg width="33.75" height="45" viewBox="0 0 384 512" style="position:absolute;left:28.125px;top:21.6px;overflow:visible"><path fill="#ffffff" d="M333.490 238a122 122 0 0 0 27-65.210C367.870 96.490 308 32 233.420 32H34a16 16 0 0 0-16 16v48a16 16 0 0 0 16 16h31.870v288H34a16 16 0 0 0-16 16v48a16 16 0 0 0 16 16h209.320c70.800 0 134.140-51.750 141-122.400 4.740-48.450-16.390-92.060-50.830-119.600zM145.660 112h87.760a48 48 0 0 1 0 96h-87.760zm87.760 288h-87.760V288h87.760a56 56 0 0 1 0 112z"/></svg>
</div>
<div class="tile" style="left:250px;top:705px;background:#f5c651">
<svg viewBox="0 0 36 36" width="85.4" height="85.4" style="position:absolute;left:2.3px;top:3.2px"><path fill="#5a3e10" d="M18 21c-3.623 0-6.027-.422-9-1-.679-.131-2 0-2 2 0 4 4.595 9 11 9 6.404 0 11-5 11-9 0-2-1.321-2.132-2-2-2.973.578-5.377 1-9 1z"/><path fill="#FFF" d="M9 22s3 1 9 1 9-1 9-1-2 4-9 4-9-4-9-4z"/><rect fill="#5a3e10" x="9.9" y="10.55" width="4.2" height="5.9" rx="2.1"/><rect fill="#5a3e10" x="21.9" y="10.55" width="4.2" height="5.9" rx="2.1"/></svg>
</div>
<div class="tile" style="left:350px;top:705px;background:#c05aaa">
<svg width="45.0" height="45" viewBox="0 0 512 512" style="position:absolute;left:22.5px;top:21.6px;overflow:visible"><path fill="#ffffff" d="M349.565 98.783C295.978 98.783 251.721 64 184.348 64c-24.955 0-47.309 4.384-68.045 12.013a55.947 55.947 0 0 0 3.586-23.562C118.117 24.015 94.806 1.206 66.338.048 34.345-1.254 8 24.296 8 56c0 19.026 9.497 35.825 24 45.945V488c0 13.255 10.745 24 24 24h16c13.255 0 24-10.745 24-24v-94.4c28.311-12.064 63.582-22.122 114.435-22.122 53.588 0 97.844 34.783 165.217 34.783 48.169 0 86.667-16.294 122.505-40.858C506.84 359.452 512 349.571 512 339.045v-243.1c0-23.393-24.269-38.87-45.485-29.016-34.338 15.948-76.454 31.854-116.95 31.854z"/></svg>
</div>
<div class="tile" style="left:450px;top:705px;background:#d2513a">
<svg width="33.75" height="45" viewBox="0 0 384 512" style="position:absolute;left:28.125px;top:21.6px;overflow:visible"><path fill="#ffffff" d="M224 136V0H24C10.7 0 0 10.7 0 24v464c0 13.3 10.7 24 24 24h336c13.3 0 24-10.700 24-24V160H248c-13.200 0-24-10.800-24-24zm65.180 216.010H224v80c0 8.840-7.160 16-16 16h-32c-8.840 0-16-7.160-16-16v-80H94.820c-14.280 0-21.410-17.290-11.270-27.360l96.420-95.700c6.650-6.610 17.390-6.610 24.040 0l96.420 95.700c10.150 10.070 3.030 27.360-11.250 27.360zM377 105L279.100 7c-4.500-4.500-10.600-7-17-7H256v128h128v-6.100c0-6.300-2.500-12.400-7-16.900z"/></svg>
</div>
<div class="tile" style="left:550px;top:705px;background:#3a578e">
<svg width="45.0" height="45" viewBox="0 0 512 512" style="position:absolute;left:21.7px;top:21.6px;overflow:visible"><path fill="#ffffff" d="M466.27 286.69C475.04 271.84 480 256 480 236.85c0-44.015-37.218-85.580-85.820-85.580H357.700c4.920-12.810 8.850-28.130 8.850-46.540C366.550 31.936 328.860 0 271.280 0c-61.607 0-58.093 94.933-71.760 108.600-22.747 22.747-49.615 66.447-68.760 83.400H32c-17.673 0-32 14.327-32 32v240c0 17.673 14.327 32 32 32h64c14.893 0 27.408-10.174 30.978-23.950 44.509 1.001 75.060 39.940 177.802 39.940 7.220 0 15.220.010 22.220.010 77.117 0 111.986-39.423 112.940-95.330 13.319-18.425 20.299-43.122 17.340-66.990 9.854-18.452 13.664-40.343 8.990-62.990zm-61.750 53.830c12.560 21.130 1.260 49.410-13.940 57.570 7.700 48.780-17.608 65.900-53.120 65.900h-37.820c-71.639 0-118.029-37.820-171.640-37.820V240h10.920c28.360 0 67.980-70.890 94.540-97.460 28.360-28.360 18.910-75.630 37.820-94.540 47.270 0 47.270 32.980 47.270 56.730 0 39.170-28.360 56.720-28.360 94.540h103.990c21.110 0 37.730 18.910 37.820 37.820.09 18.900-12.820 37.810-22.270 37.810 13.489 14.555 16.371 45.236-5.210 65.620zM88 432c0 13.255-10.745 24-24 24s-24-10.745-24-24 10.745-24 24-24 24 10.745 24 24z"/></svg>
</div>
<div class="abs" style="left:0;top:0;width:6px;height:791px;background:linear-gradient(to right,rgba(0,0,0,.5),rgba(0,0,0,.15) 50%,rgba(0,0,0,0))"></div>
</main>
</body></html>
